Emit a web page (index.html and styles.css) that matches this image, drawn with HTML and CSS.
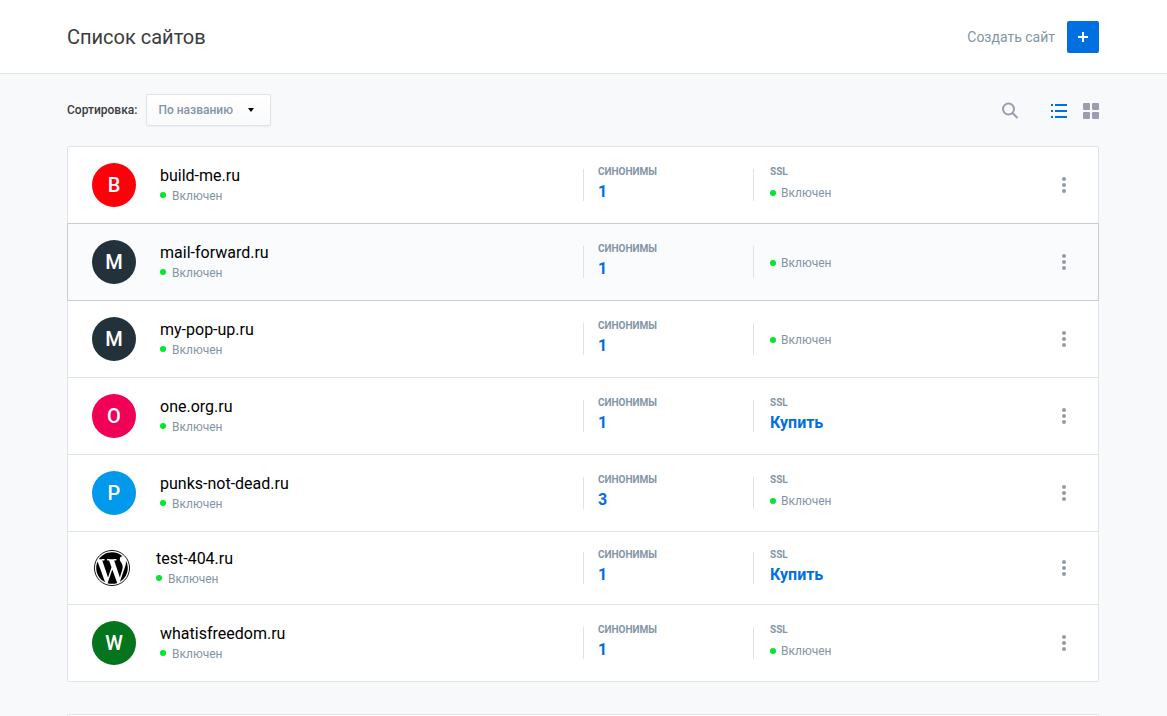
FILE: index.html
```html
<!DOCTYPE html>
<html lang="ru">
<head>
<meta charset="utf-8">
<meta name="viewport" content="width=device-width, initial-scale=1">
<title>Список сайтов</title>
<link rel="stylesheet" href="styles.css">
</head>
<body>
<header class="header">
  <h1 class="title">Список сайтов</h1>
  <label class="create-label" for="create">Создать сайт</label>
  <button class="create-button" id="create" type="button">
    <svg width="10" height="10" viewBox="0 0 10 10" aria-hidden="true"><path d="M4 0h2v4h4v2H6v4H4V6H0V4h4z" fill="#fff"/></svg>
  </button>
</header>
<main class="main">
  <div class="toolbar">
    <label class="sort-label" for="sort">Сортировка:</label>
    <div class="sort">
      <select class="sort-select" id="sort"><option>По названию</option></select>
      <svg class="sort-arrow" width="6" height="4" viewBox="0 0 6 4" aria-hidden="true"><path d="M0 0h6L3 4z"/></svg>
    </div>
    <div class="tools">
      <button class="tool tool-search" type="button" aria-label="Поиск">
        <svg width="17" height="18" viewBox="0 0 17 18" aria-hidden="true"><g fill="none" stroke="#9a9dae" stroke-width="2"><circle cx="6.5" cy="8" r="5.5"/><path d="M10.5 12l5 5"/></g></svg>
      </button>
      <button class="tool" type="button" aria-label="Список">
        <svg width="16" height="18" viewBox="0 0 16 18" aria-hidden="true"><path fill="#006fe0" d="M0 3h2v2H0zM4 3h12v2H4zM0 9h2v2H0zM4 9h12v2H4zM0 15h2v2H0zM4 15h12v2H4z"/></svg>
      </button>
      <button class="tool" type="button" aria-label="Плитка">
        <svg width="16" height="18" viewBox="0 0 16 18" aria-hidden="true"><g fill="#9a9dae"><rect y="2" width="7" height="7" rx="1"/><rect x="9" y="2" width="7" height="7" rx="1"/><rect y="11" width="7" height="7" rx="1"/><rect x="9" y="11" width="7" height="7" rx="1"/></g></svg>
      </button>
    </div>
  </div>
  <ul class="sites">
    <li class="site">
      <div class="identity"><span class="avatar avatar-red">B</span><div class="about"><div class="name">build-me.ru</div><div class="status">Включен</div></div></div>
      <div class="cell synonyms"><div class="info"><div class="caption">СИНОНИМЫ</div><a class="value" href="#">1</a></div></div>
      <div class="cell ssl"><div class="info"><div class="caption">SSL</div><div class="status status-value">Включен</div></div></div>
      <button class="menu" type="button" aria-label="Меню"><svg width="4" height="16" viewBox="0 0 4 16"><g fill="#939ba3"><circle cx="2" cy="2" r="2"/><circle cx="2" cy="8" r="2"/><circle cx="2" cy="14" r="2"/></g></svg></button>
    </li>
    <li class="site site-active">
      <div class="identity"><span class="avatar avatar-dark">M</span><div class="about"><div class="name">mail-forward.ru</div><div class="status">Включен</div></div></div>
      <div class="cell synonyms"><div class="info"><div class="caption">СИНОНИМЫ</div><a class="value" href="#">1</a></div></div>
      <div class="cell ssl"><div class="info"><div class="status">Включен</div></div></div>
      <button class="menu" type="button" aria-label="Меню"><svg width="4" height="16" viewBox="0 0 4 16"><g fill="#939ba3"><circle cx="2" cy="2" r="2"/><circle cx="2" cy="8" r="2"/><circle cx="2" cy="14" r="2"/></g></svg></button>
    </li>
    <li class="site">
      <div class="identity"><span class="avatar avatar-dark">M</span><div class="about"><div class="name">my-pop-up.ru</div><div class="status">Включен</div></div></div>
      <div class="cell synonyms"><div class="info"><div class="caption">СИНОНИМЫ</div><a class="value" href="#">1</a></div></div>
      <div class="cell ssl"><div class="info"><div class="status">Включен</div></div></div>
      <button class="menu" type="button" aria-label="Меню"><svg width="4" height="16" viewBox="0 0 4 16"><g fill="#939ba3"><circle cx="2" cy="2" r="2"/><circle cx="2" cy="8" r="2"/><circle cx="2" cy="14" r="2"/></g></svg></button>
    </li>
    <li class="site">
      <div class="identity"><span class="avatar avatar-pink">O</span><div class="about"><div class="name">one.org.ru</div><div class="status">Включен</div></div></div>
      <div class="cell synonyms"><div class="info"><div class="caption">СИНОНИМЫ</div><a class="value" href="#">1</a></div></div>
      <div class="cell ssl"><div class="info"><div class="caption">SSL</div><a class="value" href="#">Купить</a></div></div>
      <button class="menu" type="button" aria-label="Меню"><svg width="4" height="16" viewBox="0 0 4 16"><g fill="#939ba3"><circle cx="2" cy="2" r="2"/><circle cx="2" cy="8" r="2"/><circle cx="2" cy="14" r="2"/></g></svg></button>
    </li>
    <li class="site">
      <div class="identity"><span class="avatar avatar-blue">P</span><div class="about"><div class="name">punks-not-dead.ru</div><div class="status">Включен</div></div></div>
      <div class="cell synonyms"><div class="info"><div class="caption">СИНОНИМЫ</div><a class="value" href="#">3</a></div></div>
      <div class="cell ssl"><div class="info"><div class="caption">SSL</div><div class="status status-value">Включен</div></div></div>
      <button class="menu" type="button" aria-label="Меню"><svg width="4" height="16" viewBox="0 0 4 16"><g fill="#939ba3"><circle cx="2" cy="2" r="2"/><circle cx="2" cy="8" r="2"/><circle cx="2" cy="14" r="2"/></g></svg></button>
    </li>
    <li class="site">
      <div class="identity">
        <svg class="logo" width="40" height="40" viewBox="0 0 24 24" role="img" aria-label="WordPress"><g transform="translate(1.2 1.2) scale(.9)"><circle cx="12" cy="12" r="11.7" fill="none" stroke="#000" stroke-width=".6"/><path transform="translate(.3 .3) scale(.975)" d="M21.469 6.825c.84 1.537 1.318 3.3 1.318 5.175 0 3.979-2.156 7.456-5.363 9.325l3.295-9.527c.615-1.54.82-2.771.82-3.864 0-.405-.026-.78-.07-1.11m-7.981.105c.647-.03 1.232-.105 1.232-.105.582-.075.514-.93-.067-.899 0 0-1.755.135-2.88.135-1.064 0-2.85-.15-2.85-.15-.585-.03-.661.855-.075.885 0 0 .54.061 1.125.09l1.68 4.605-2.37 7.08L5.354 6.9c.649-.03 1.234-.1 1.234-.1.585-.075.516-.93-.065-.896 0 0-1.746.138-2.874.138-.2 0-.438-.008-.69-.015C4.911 3.15 8.235 1.215 12 1.215c2.809 0 5.365 1.072 7.286 2.833-.046-.003-.091-.009-.141-.009-1.06 0-1.812.923-1.812 1.914 0 .89.513 1.643 1.06 2.531.411.72.89 1.643.89 2.977 0 .915-.354 1.994-.821 3.479l-1.075 3.585-3.9-11.61zM12 22.784c-1.059 0-2.081-.153-3.048-.437l3.237-9.406 3.315 9.087c.024.053.05.101.078.149-1.12.393-2.325.609-3.582.609M1.211 12c0-1.564.336-3.05.935-4.39L7.29 21.709C3.694 19.96 1.212 16.271 1.211 12"/></g></svg>
        <div class="about"><div class="name">test-404.ru</div><div class="status">Включен</div></div>
      </div>
      <div class="cell synonyms"><div class="info"><div class="caption">СИНОНИМЫ</div><a class="value" href="#">1</a></div></div>
      <div class="cell ssl"><div class="info"><div class="caption">SSL</div><a class="value" href="#">Купить</a></div></div>
      <button class="menu" type="button" aria-label="Меню"><svg width="4" height="16" viewBox="0 0 4 16"><g fill="#939ba3"><circle cx="2" cy="2" r="2"/><circle cx="2" cy="8" r="2"/><circle cx="2" cy="14" r="2"/></g></svg></button>
    </li>
    <li class="site">
      <div class="identity"><span class="avatar avatar-green">W</span><div class="about"><div class="name">whatisfreedom.ru</div><div class="status">Включен</div></div></div>
      <div class="cell synonyms"><div class="info"><div class="caption">СИНОНИМЫ</div><a class="value" href="#">1</a></div></div>
      <div class="cell ssl"><div class="info"><div class="caption">SSL</div><div class="status status-value">Включен</div></div></div>
      <button class="menu" type="button" aria-label="Меню"><svg width="4" height="16" viewBox="0 0 4 16"><g fill="#939ba3"><circle cx="2" cy="2" r="2"/><circle cx="2" cy="8" r="2"/><circle cx="2" cy="14" r="2"/></g></svg></button>
    </li>
  </ul>
  <section class="panel"></section>
</main>
</body>
</html>
```
FILE: styles.css
```css
* { box-sizing: border-box; }

body {
  margin: 0;
  min-height: 100vh;
  display: flex;
  flex-direction: column;
  background: #f8f9fb;
  color: #000;
  font-family: Roboto, "Noto Sans", sans-serif;
}

button {
  padding: 0;
  border: 0;
  background: none;
  cursor: pointer;
}

svg { display: block; }

.header {
  display: flex;
  align-items: center;
  padding: 21px 68px 20px 67px;
  background: #fff;
  border-bottom: 1px solid #dfe4ea;
}

.title {
  margin: 0 auto 0 0;
  font-size: 20px;
  line-height: 32px;
  font-weight: 400;
  color: #3a3c40;
}

.create-label {
  margin-right: 12px;
  font-size: 14px;
  line-height: 32px;
  color: #8395a3;
}

.create-button {
  display: grid;
  place-items: center;
  width: 32px;
  height: 32px;
  border-radius: 2px;
  background: #006fe0;
}

.main {
  flex: 1;
  display: flex;
  flex-direction: column;
  padding: 0 68px 0 67px;
}

.toolbar {
  display: flex;
  align-items: center;
  padding: 20px 0;
}

.sort-label {
  margin-right: 9px;
  font-size: 12px;
  font-weight: 500;
  color: #3a3c40;
}

.sort { position: relative; }

.sort-select {
  appearance: none;
  display: block;
  width: 125px;
  height: 32px;
  padding: 0 11px;
  border: 1px solid #dfe4ea;
  border-radius: 2px;
  background: linear-gradient(#fff, #f9fafc);
  box-shadow: 0 1px 2px rgba(40, 60, 90, 0.06);
  font: 500 12px Roboto, "Noto Sans", sans-serif;
  color: #8395a5;
}

.sort-arrow {
  position: absolute;
  top: 14px;
  right: 17px;
  pointer-events: none;
}

.tools {
  display: flex;
  gap: 16px;
  margin-left: auto;
}

.tool-search { margin-right: 16px; }

.sites {
  margin: 0;
  padding: 1px 0 0;
  list-style: none;
}

.site {
  display: grid;
  grid-template-columns: 50% 170px 1fr auto;
  align-items: center;
  margin-top: -1px;
  border: 1px solid #dfe4ea;
  background: #fff;
}

.site:first-child { border-radius: 2px 2px 0 0; }
.site:last-child { border-radius: 0 0 2px 2px; }

.site-active {
  position: relative;
  border-color: #c8ccd2;
  background: #fafbfd;
}

.identity {
  display: flex;
  align-items: center;
  gap: 24px;
  padding: 16px 24px;
}

.about { margin: 1px 0 -1px; }

.info { padding-top: 2px; }

.avatar {
  width: 44px;
  height: 44px;
  border-radius: 50%;
  color: #fff;
  font-size: 20px;
  font-weight: 500;
  line-height: 44px;
  text-align: center;
}

.avatar-red { background: #ff000b; }
.avatar-dark { background: #23323a; }
.avatar-pink { background: #f00056; }
.avatar-blue { background: #0099ec; }
.avatar-green { background: #04741d; }

.name {
  font-size: 16px;
  line-height: 20px;
}

.status {
  display: flex;
  align-items: center;
  gap: 6px;
  font-size: 12px;
  line-height: 20px;
  color: #8395a5;
}

.status::before {
  content: "";
  width: 6px;
  height: 6px;
  border-radius: 50%;
  background: #00e62c;
}

.about .status::before { margin-bottom: 2px; }

.info .status { gap: 5px; }

.cell {
  display: flex;
  align-items: center;
  gap: 16px;
}

.synonyms { gap: 14px; }

.cell::before {
  content: "";
  width: 1px;
  height: 32px;
  background: #dfe2e5;
}

.caption {
  font-size: 10px;
  line-height: 12px;
  font-weight: 700;
  color: #8395a5;
}

.value {
  display: block;
  font-size: 16px;
  line-height: 28px;
  font-weight: 700;
  color: #006fe0;
  text-decoration: none;
}

.status-value {
  padding-top: 5px;
  padding-bottom: 3px;
}

.menu {
  display: grid;
  place-items: center;
  width: 20px;
  height: 32px;
  margin-right: 24px;
}

.panel {
  flex: 1;
  margin-top: 32px;
  border: solid #dfe4ea;
  border-width: 1px 1px 0;
  border-radius: 2px 2px 0 0;
  background: #fff;
}
```
